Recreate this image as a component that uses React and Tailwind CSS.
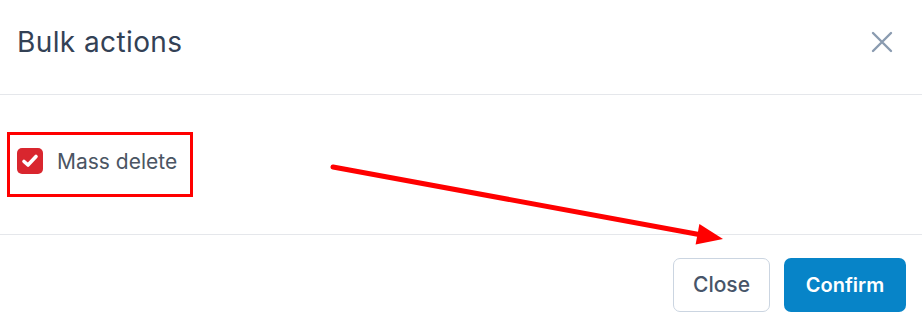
import { X } from 'lucide-react';

// Bulk actions dialog with the red annotation (box + arrow) on top
const App = () => {
  return (
    <div className="relative w-[922px] h-[327px] bg-white font-['Inter',sans-serif] overflow-hidden">
      {/* Header */}
      <div className="h-[95px] flex items-center justify-between pl-[17px] pr-[29px] pb-[10px] border-b border-[#e5e7eb]">
        <h2 className="text-[28px] font-normal tracking-[0.4px] text-[#334155] leading-none">Bulk actions</h2>
        <button className="text-[#8a9bb0]">
          <svg width="22" height="22" viewBox="0 0 22 22" fill="none" stroke="currentColor" strokeWidth="2.4" strokeLinecap="round">
            <path d="M2 2L20 20M20 2L2 20" />
          </svg>
        </button>
      </div>

      {/* Body */}
      <div className="h-[140px] border-b border-[#e5e7eb] px-[17px] pt-[53px]">
        <label className="flex items-center gap-[14px]">
          <span className="w-[26px] h-[26px] rounded-[5px] bg-[#d9262e] flex items-center justify-center">
            <svg width="18" height="18" viewBox="0 0 18 18" fill="none" stroke="white" strokeWidth="3.6" strokeLinecap="round" strokeLinejoin="round">
              <path d="M3 9.5L7 13L15 4.5" />
            </svg>
          </span>
          <span className="text-[21px] text-[#4b5563] leading-none">Mass delete</span>
        </label>
      </div>

      {/* Footer */}
      <div className="flex justify-end items-start gap-[14px] pr-[16px] pt-[23px]">
        <button className="w-[97px] h-[54px] rounded-[7px] border border-[#cbd5e1] bg-white text-[21px] font-medium text-[#475569]">
          Close
        </button>
        <button className="w-[122px] h-[54px] rounded-[7px] bg-[#0784c8] text-[20px] font-semibold text-white">
          Confirm
        </button>
      </div>

      {/* Annotation */}
      <div className="absolute left-[7px] top-[132px] w-[186px] h-[65px] border-[3px] border-[#ff0000]" />
      <svg className="absolute inset-0 pointer-events-none" width="922" height="327">
        <line x1="333" y1="167" x2="699" y2="234.5" stroke="#ff0000" strokeWidth="5" strokeLinecap="round" />
        <polygon points="723,239 695.6,244.5 699.4,224" fill="#ff0000" />
      </svg>
    </div>
  );
};

export default App;
